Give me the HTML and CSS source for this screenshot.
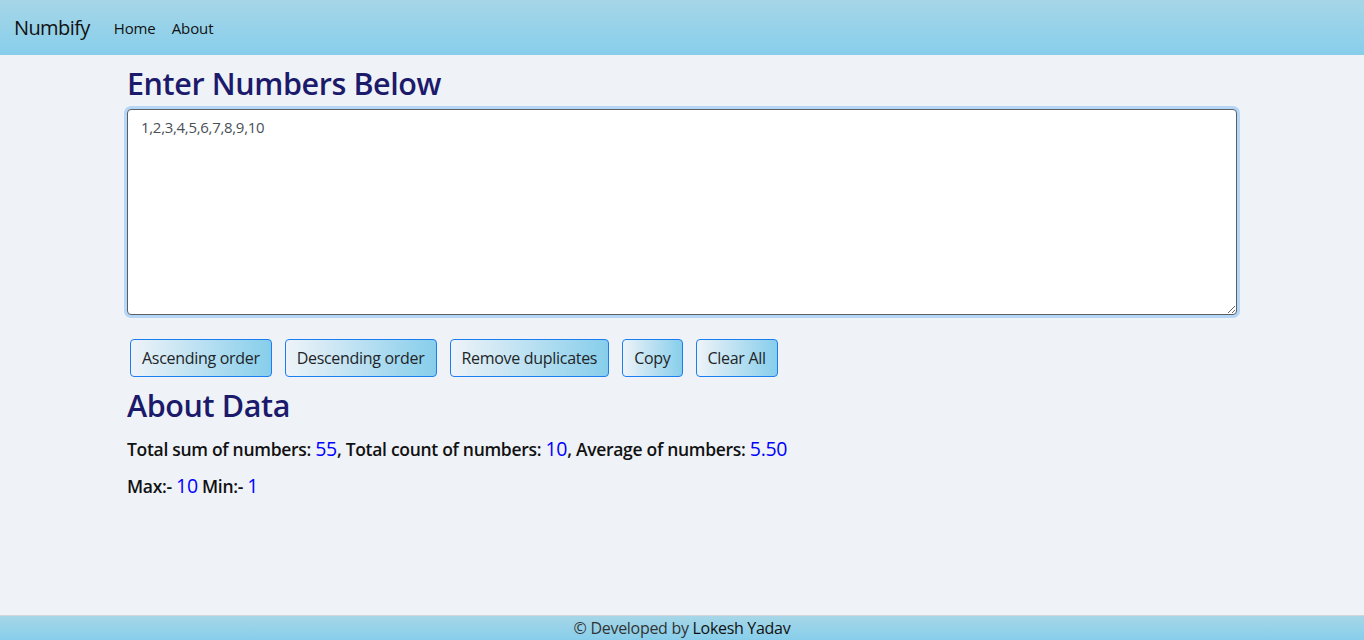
FILE: index.html
```html
<!DOCTYPE html>
<html lang="en">
<head>
<meta charset="utf-8">
<title>Numbify</title>
<link rel="stylesheet" href="styles.css">
</head>
<body>
<nav class="navbar">
  <a class="brand" href="#">Numbify</a>
  <a class="nav-link" href="#">Home</a>
  <a class="nav-link" href="#">About</a>
</nav>
<main class="container">
  <h2 class="title">Enter Numbers Below</h2>
  <textarea class="numbers" rows="8">1,2,3,4,5,6,7,8,9,10</textarea>
  <div class="actions">
    <button class="btn">Ascending order</button>
    <button class="btn">Descending order</button>
    <button class="btn">Remove duplicates</button>
    <button class="btn">Copy</button>
    <button class="btn">Clear All</button>
  </div>
  <h2 class="title about">About Data</h2>
  <p class="stat">Total sum of numbers: <span class="val">55</span>, Total count of numbers: <span class="val">10</span>, Average of numbers: <span class="val">5.50</span></p>
  <p class="stat">Max:- <span class="val">10</span> Min:- <span class="val">1</span></p>
</main>
<footer class="footer">© Developed by <a class="author" href="#">Lokesh Yadav</a></footer>
</body>
</html>
```
FILE: styles.css
```css
* { box-sizing: border-box; }
html, body { height: 100%; }
body {
  margin: 0;
  background: #eff3f8;
  font-family: "Open Sans", "Noto Sans", sans-serif;
  color: #212529;
  display: flex;
  flex-direction: column;
}
.navbar {
  height: 55px;
  display: flex;
  align-items: center;
  padding: 0 16px 0 14px;
  background: linear-gradient(to bottom, #a6d6e7, #87ceeb);
}
.brand {
  font-size: 20px;
  color: #111;
  text-decoration: none;
  margin-right: 16px;
  letter-spacing: -0.6px;
}
.nav-link {
  font-size: 15px;
  color: #111;
  text-decoration: none;
  padding: 0 8px;
  letter-spacing: -0.1px;
}
.container {
  width: 1110px;
  margin: 0 auto;
  flex: 1;
  padding-top: 10px;
}
.title {
  margin: 0 0 7px;
  font-size: 30.5px;
  font-weight: 600;
  line-height: 1.2;
  color: #1c1a6b;
  letter-spacing: -0.4px;
}
.numbers {
  display: block;
  width: 100%;
  height: 206px;
  padding: 6px 13px;
  font-family: inherit;
  font-size: 15px;
  line-height: 1.5;
  color: #495057;
  background: #fff;
  border: 1px solid #5a5f66;
  border-radius: 4px;
  box-shadow: 0 0 0 3px #b6d6f7;
  outline: none;
  resize: vertical;
  letter-spacing: -0.3px;
}
.actions {
  display: flex;
  gap: 13px;
  margin: 24px 0 10px 3px;
}
.btn {
  height: 38px;
  padding: 0 11px;
  font-family: inherit;
  font-size: 16px;
  color: #212529;
  border: 1px solid #1a7ef2;
  border-radius: 4px;
  background: linear-gradient(to right, #eef3f8, #87ceeb);
  letter-spacing: -0.3px;
  cursor: pointer;
}
.about { margin-bottom: 12px; }
.stat {
  margin: 0 0 10px;
  font-size: 17.5px;
  font-weight: 600;
  color: #111;
  letter-spacing: -0.3px;
}
.val {
  color: #0000ff;
  font-size: 19.5px;
  font-weight: 500;
}
.footer {
  height: 25px;
  border-top: 1px solid #d0d6dc;
  background: linear-gradient(to bottom, #a6d6e7, #87ceeb);
  text-align: center;
  font-size: 16px;
  line-height: 24px;
  color: #333;
  letter-spacing: -0.3px;
}
.author { color: #111; text-decoration: none; }
```
